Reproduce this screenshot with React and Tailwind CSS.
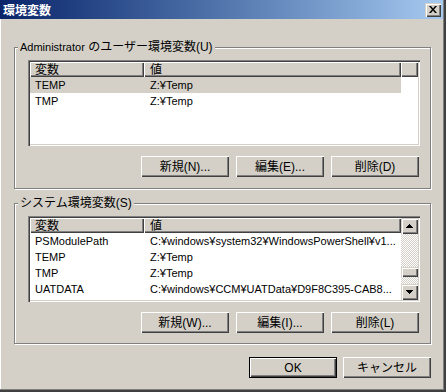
import React from "react";

const btnBevel =
  "shadow-[inset_1px_1px_0_#ffffff,inset_-1px_-1px_0_#404040,inset_-2px_-2px_0_#808080]";
const sbBevel =
  "shadow-[inset_1px_1px_0_#d4d0c8,inset_2px_2px_0_#ffffff,inset_-1px_-1px_0_#404040,inset_-2px_-2px_0_#808080]";
const checker =
  "bg-[image:repeating-conic-gradient(#ffffff_0%_25%,#d4d0c8_0%_50%)] bg-[length:2px_2px]";

function Button({ children, isDefault }) {
  return (
    <div
      className={`w-[88px] h-[21px] flex items-center justify-center bg-[#d4d0c8] text-[12px] leading-none text-black ${btnBevel} ${
        isDefault ? "border border-black" : ""
      }`}
    >
      {children}
    </div>
  );
}

function Group({ label, children }) {
  return (
    <div className="relative border border-[#808080] shadow-[1px_1px_0_#ffffff,inset_1px_1px_0_#ffffff] pt-[12px] pl-[13px] pr-[10px]">
      <span className="absolute left-[3px] top-[-8px] bg-[#d4d0c8] px-[2px] leading-[14px] text-[12px] text-black whitespace-nowrap">
        {label}
      </span>
      {children}
    </div>
  );
}

function HeaderCell({ children, className }) {
  return (
    <div
      className={`h-[15px] flex items-center bg-[#d4d0c8] text-[12px] text-black ${btnBevel} ${className}`}
    >
      {children}
    </div>
  );
}

function Header() {
  return (
    <div className="flex shrink-0">
      <HeaderCell className="w-[114px] pl-[5px]">変数</HeaderCell>
      <HeaderCell className="w-[257px] pl-[6px]">値</HeaderCell>
    </div>
  );
}

function Row({ name, value, selected }) {
  return (
    <div
      className={`flex w-[371px] h-[16px] shrink-0 items-center text-[11px] leading-[16px] text-black ${
        selected ? "bg-[#d4d0c8]" : ""
      }`}
    >
      <div className="w-[114px] pl-[5px] whitespace-nowrap overflow-hidden">{name}</div>
      <div className="w-[257px] pl-[6px] whitespace-nowrap overflow-hidden">{value}</div>
    </div>
  );
}

function UpArrow() {
  return (
    <svg width="7" height="4" viewBox="0 0 7 4">
      <path d="M3 0h1v1h1v1h1v1h1v1H0V3h1V2h1V1h1z" fill="#000000" />
    </svg>
  );
}

function DownArrow() {
  return (
    <svg width="7" height="4" viewBox="0 0 7 4">
      <path d="M0 0h7v1H6v1H5v1H4v1H3V3H2V2H1V1H0z" fill="#000000" />
    </svg>
  );
}

function ScrollBar() {
  return (
    <div className="flex-1 flex flex-col">
      <div className={`h-[16px] shrink-0 flex items-center justify-center bg-[#d4d0c8] ${sbBevel}`}>
        <UpArrow />
      </div>
      <div className={`h-[33px] shrink-0 ${checker}`} />
      <div className={`h-[10px] shrink-0 bg-[#d4d0c8] ${sbBevel}`} />
      <div className={`flex-1 ${checker}`} />
      <div className={`h-[16px] shrink-0 flex items-center justify-center bg-[#d4d0c8] ${sbBevel}`}>
        <DownArrow />
      </div>
    </div>
  );
}

const listFrame =
  "h-[86px] bg-white p-[2px] flex overflow-hidden shadow-[inset_1px_1px_0_#808080,inset_2px_2px_0_#404040,inset_-1px_-1px_0_#ffffff,inset_-2px_-2px_0_#d4d0c8]";

const userVars = [
  { name: "TEMP", value: "Z:¥Temp", selected: true },
  { name: "TMP", value: "Z:¥Temp" },
];

const systemVars = [
  { name: "PSModulePath", value: "C:¥windows¥system32¥WindowsPowerShell¥v1..." },
  { name: "TEMP", value: "Z:¥Temp" },
  { name: "TMP", value: "Z:¥Temp" },
  { name: "UATDATA", value: "C:¥windows¥CCM¥UATData¥D9F8C395-CAB8..." },
];

export default function App() {
  return (
    <div className="w-[446px] h-[392px] bg-[#d4d0c8] flex flex-col pr-[3px] pb-[3px] font-['Liberation_Sans','Noto_Sans_CJK_JP',sans-serif] shadow-[inset_-1px_-1px_0_#404040,inset_-2px_-2px_0_#404040,inset_-3px_-3px_0_#808080]">
      {/* title bar */}
      <div className="h-[19px] shrink-0 flex items-center justify-between pl-[3px] pr-[2px] bg-linear-to-r from-[#0a246a] to-[#a6caf0]">
        <span className="text-[12px] font-bold text-white leading-none font-['Noto_Sans_CJK_JP',sans-serif]">
          環境変数
        </span>
        <div className={`w-[16px] h-[14px] flex items-center justify-center bg-[#d4d0c8] ${sbBevel}`}>
          <svg width="8" height="7" viewBox="0 0 8 7">
            <path d="M0 0h2l2 2.5L6 0h2L5 3.5 8 7H6L4 4.5 2 7H0l3-3.5z" fill="#000000" />
          </svg>
        </div>
      </div>

      <div className="flex-1 flex flex-col border-l border-white pl-[13px] pr-[12px] pt-[28px]">
        <Group
          label={
            <>
              <span className="text-[11px]">Administrator</span> のユーザー環境変数(U)
            </>
          }
        >
          <div className={listFrame}>
            <div className="flex-1 flex flex-col">
              <div className="flex shrink-0">
                <Header />
                <HeaderCell className="flex-1" />
              </div>
              {userVars.map((r) => (
                <Row key={r.name} {...r} />
              ))}
            </div>
          </div>
          <div className="flex justify-end gap-[7px] mt-[10px] mb-[11px] mr-[1px]">
            <Button>新規(N)...</Button>
            <Button>編集(E)...</Button>
            <Button>削除(D)</Button>
          </div>
        </Group>

        <div className="mt-[14px]">
          <Group label="システム環境変数(S)">
            <div className={listFrame}>
              <div className="w-[371px] flex flex-col">
                <Header />
                {systemVars.map((r) => (
                  <Row key={r.name} {...r} />
                ))}
              </div>
              <ScrollBar />
            </div>
            <div className="flex justify-end gap-[7px] mt-[10px] mb-[10px] mr-[1px]">
              <Button>新規(W)...</Button>
              <Button>編集(I)...</Button>
              <Button>削除(L)</Button>
            </div>
          </Group>
        </div>

        <div className="flex justify-end gap-[6px] mt-[13px]">
          <Button isDefault>OK</Button>
          <Button>キャンセル</Button>
        </div>
      </div>
    </div>
  );
}
